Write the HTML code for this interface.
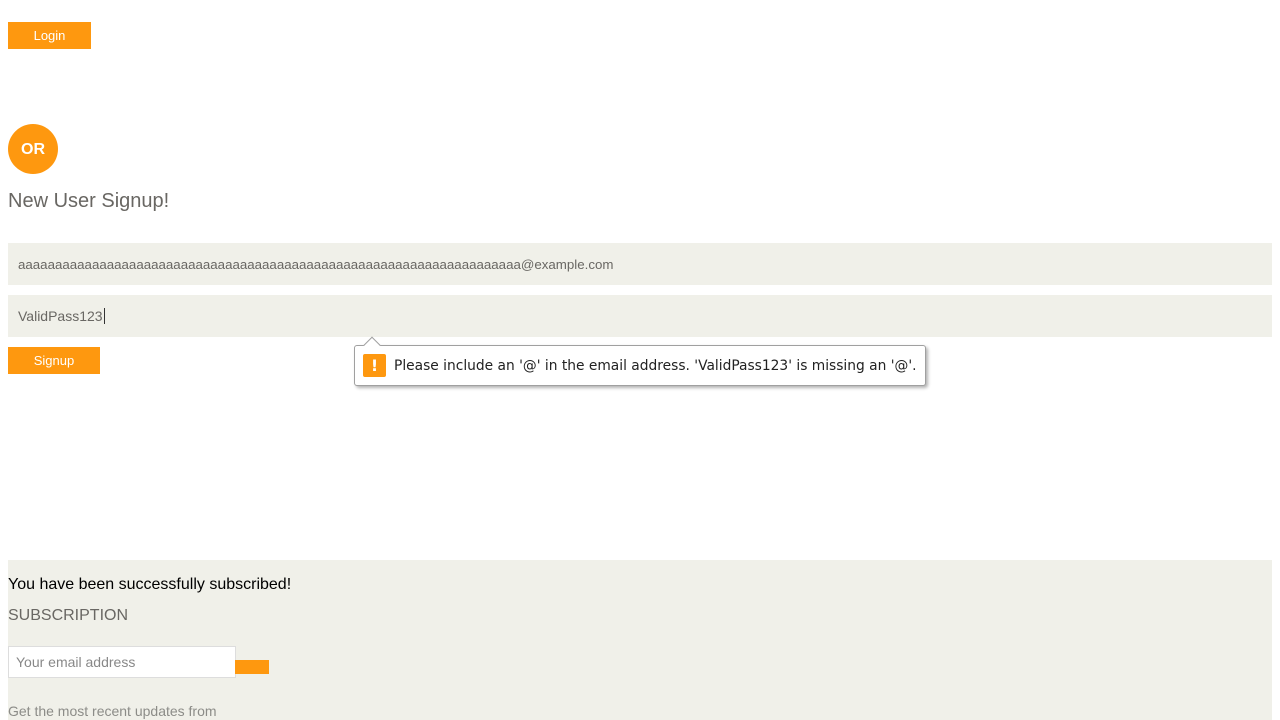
<!DOCTYPE html>
<html><head><style>
*{margin:0;padding:0;box-sizing:border-box}
body{width:1280px;height:720px;overflow:hidden;background:#fff;font-family:"Liberation Sans",sans-serif;position:relative}
.abs{position:absolute}
.btn{background:#fe980f;color:#fff;font-size:13px;text-align:center}
.inp{background:#f0f0e9;color:#696763;font-size:14px;padding-left:10px;line-height:42px;height:42px;left:8px;width:1264px}
</style></head><body>
<div class="abs btn" style="left:8px;top:22px;width:83px;height:27px;line-height:27px">Login</div>
<div class="abs" style="left:8px;top:124px;width:50px;height:50px;border-radius:50%;background:#fe980f;color:#fff;font-weight:bold;font-size:16px;text-align:center;line-height:51px">OR</div>
<div class="abs" style="left:8px;top:190px;font-size:20px;color:#696763">New User Signup!</div>
<div class="abs inp" style="top:243px"><span style="font-size:13.3px">aaaaaaaaaaaaaaaaaaaaaaaaaaaaaaaaaaaaaaaaaaaaaaaaaaaaaaaaaaaaaaaaaaaa@example.com</span></div>
<div class="abs inp" style="top:295px">ValidPass123<span style="border-left:1px solid #333;margin-left:1px"></span></div>
<div class="abs btn" style="left:8px;top:347px;width:92px;height:27px;line-height:27px">Signup</div>
<div class="abs" style="left:354px;top:345px;width:572px;height:41px;background:#fff;border:1px solid #a0a0a0;border-radius:3px;box-shadow:2px 2px 3px rgba(0,0,0,.3);font-family:'DejaVu Sans',sans-serif;font-size:13.8px;color:#222;line-height:41px;padding-left:39px">Please include an '@' in the email address. 'ValidPass123' is missing an '@'.
<div class="abs" style="left:8px;top:8px;width:23px;height:23px;background:#fe980f;border-radius:2px;color:#fff;font-weight:bold;text-align:center;line-height:23px;font-size:16px">!</div>
<div class="abs" style="left:11px;top:-7px;width:12px;height:12px;background:#fff;border-left:1px solid #a0a0a0;border-top:1px solid #a0a0a0;transform:rotate(45deg)"></div>
</div>
<div class="abs" style="left:8px;top:560px;width:1264px;height:160px;background:#f0f0e9">
<div class="abs" style="left:0;top:16px;font-size:16px;color:#000">You have been successfully subscribed!</div>
<div class="abs" style="left:0;top:47px;font-size:16px;color:#696763">SUBSCRIPTION</div>
<div class="abs" style="left:0;top:86px;width:228px;height:32px;background:#fff;border:1px solid #ddd;color:#888;font-size:14px;padding-left:7px;line-height:30px">Your email address</div>
<div class="abs" style="left:227px;top:100px;width:34px;height:14px;background:#fe980f"></div>
<div class="abs" style="left:0;top:143px;font-size:14px;color:#8c8c88">Get the most recent updates from</div>
</div>
</body></html>
